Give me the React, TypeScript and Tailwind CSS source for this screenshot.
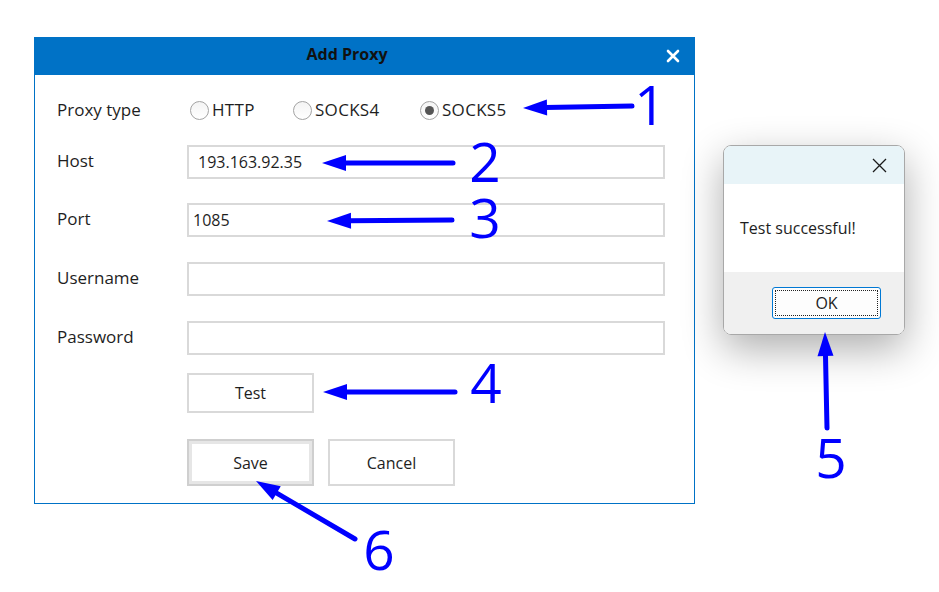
import React from "react";

const font = { fontFamily: '"Open Sans", "Noto Sans", Arial, sans-serif' };

function Field({ label, value, pad = "pl-[9px]" }: { label: string; value?: string; pad?: string }) {
  return (
    <div className="flex items-center">
      <div className="w-[130px] text-[17px] text-[#1e1e1e] -mt-[3px]">{label}</div>
      <div className={`w-[478px] h-[34px] border-2 border-[#d9d9d9] bg-white flex items-center text-[16px] text-[#1e1e1e] ${pad}`}>
        {value}
      </div>
    </div>
  );
}

function Radio({ label, checked, width }: { label: string; checked?: boolean; width: string }) {
  return (
    <div className={`flex items-center gap-[3px] ${width}`}>
      <span className="w-[19px] h-[19px] rounded-full border border-[#a3a3a3] bg-gradient-to-b from-[#f4f4f4] to-white flex items-center justify-center">
        {checked && <span className="w-[9px] h-[9px] rounded-full bg-[#555]" />}
      </span>
      <span className="text-[17px] tracking-[0.3px] text-[#1e1e1e]">{label}</span>
    </div>
  );
}

function Arrow({ x1, y1, x2, y2 }: { x1: number; y1: number; x2: number; y2: number }) {
  // tail (x1,y1) -> tip (x2,y2)
  const dx = x2 - x1;
  const dy = y2 - y1;
  const len = Math.hypot(dx, dy);
  const ux = dx / len;
  const uy = dy / len;
  const head = 24;
  const half = 8;
  const bx = x2 - ux * head;
  const by = y2 - uy * head;
  const pts = `${x2},${y2} ${bx - uy * half},${by + ux * half} ${bx + uy * half},${by - ux * half}`;
  return (
    <g>
      <line x1={x1} y1={y1} x2={bx + ux * 2} y2={by + uy * 2} stroke="#0000ff" strokeWidth={5} strokeLinecap="round" />
      <polygon points={pts} fill="#0000ff" />
    </g>
  );
}

function Num({ x, y, n }: { x: number; y: number; n: string }) {
  return (
    <text x={x} y={y} textAnchor="middle" fill="#0000ff" fontSize={55} fontWeight={400} style={font}>
      {n}
    </text>
  );
}

export default function App() {
  return (
    <div className="relative w-[939px] h-[592px] bg-white overflow-hidden flex items-start" style={font}>
      {/* Add Proxy window */}
      <div className="ml-[34px] mt-[37px] w-[661px] h-[467px] flex flex-col">
        <div className="h-[38px] bg-[#0072c6] flex items-center shrink-0">
          <div className="flex-1 text-center text-[16px] font-bold text-[#111] -mt-[4px]">Add Proxy</div>
          <div className="w-[35px] flex items-center justify-center pr-[10px]">
            <svg width="14" height="14" viewBox="0 0 14 14">
              <path d="M2 2 L12 12 M12 2 L2 12" stroke="#fff" strokeWidth="2.6" strokeLinecap="round" />
            </svg>
          </div>
        </div>
        <div className="flex-1 border-x border-b border-[#0072c6] pl-[22px] flex flex-col">
          <div className="mt-[18px] h-[34px] flex items-center">
            <div className="w-[133px] text-[17px] text-[#1e1e1e]">Proxy type</div>
            <Radio label="HTTP" width="w-[103px]" />
            <Radio label="SOCKS4" width="w-[127px]" />
            <Radio label="SOCKS5" checked width="w-[100px]" />
          </div>
          <div className="mt-[18px]">
            <Field label="Host" value="193.163.92.35" />
          </div>
          <div className="mt-[24px]">
            <Field label="Port" value="1085" pad="pl-[4px]" />
          </div>
          <div className="mt-[25px]">
            <Field label="Username" />
          </div>
          <div className="mt-[25px]">
            <Field label="Password" />
          </div>
          <div className="mt-[18px] pl-[130px]">
            <button className="w-[127px] h-[40px] border-2 border-[#d9d9d9] bg-white text-[16px] text-[#1e1e1e]">Test</button>
          </div>
          <div className="mt-[26px] pl-[130px] flex gap-[14px]">
            <button className="w-[127px] h-[47px] border-2 border-[#cfcfcf] bg-white shadow-[inset_0_0_0_3px_#e6e6e6] text-[16px] text-[#1e1e1e]">
              Save
            </button>
            <button className="w-[127px] h-[47px] border-2 border-[#d9d9d9] bg-white text-[16px] text-[#1e1e1e]">Cancel</button>
          </div>
        </div>
      </div>

      {/* message box */}
      <div className="ml-[28px] mt-[145px] w-[182px] h-[190px] rounded-[8px] border-[1.5px] border-[#a8a8a8] overflow-hidden flex flex-col shadow-[0_14px_40px_rgba(0,0,0,0.32)]">
        <div className="h-[38px] bg-[#e8f4f8] flex items-center justify-end pr-[17px] shrink-0">
          <svg width="15" height="15" viewBox="0 0 15 15">
            <path d="M1 1 L14 14 M14 1 L1 14" stroke="#1a1a1a" strokeWidth="1.3" />
          </svg>
        </div>
        <div className="h-[88px] bg-white flex items-center pl-[16px] text-[16px] text-[#1e1e1e] shrink-0">Test successful!</div>
        <div className="flex-1 bg-[#f0f0f0] flex justify-end pr-[23px] pt-[15px]">
          <button className="w-[109px] h-[32px] rounded-[3px] border-[1.5px] border-[#0078d4] bg-[#fdfdfd] p-[2px]">
            <span className="w-full h-full border border-dotted border-[#222] flex items-center justify-center text-[16px] text-[#1e1e1e]">
              OK
            </span>
          </button>
        </div>
      </div>

      {/* annotations */}
      <svg className="absolute inset-0 pointer-events-none" width="939" height="592" viewBox="0 0 939 592">
        <Arrow x1={632} y1={106} x2={523} y2={108} />
        <Num x={650} y={125} n="1" />
        <Arrow x1={453} y1={163} x2={322} y2={163} />
        <Num x={485} y={182} n="2" />
        <Arrow x1={452} y1={220} x2={327} y2={221} />
        <Num x={485} y={238} n="3" />
        <Arrow x1={455} y1={392} x2={323} y2={392} />
        <Num x={486} y={403} n="4" />
        <Arrow x1={827} y1={428} x2={825} y2={332} />
        <Num x={831} y={478} n="5" />
        <Arrow x1={355} y1={539} x2={256} y2={481} />
        <Num x={379} y={570} n="6" />
      </svg>
    </div>
  );
}
